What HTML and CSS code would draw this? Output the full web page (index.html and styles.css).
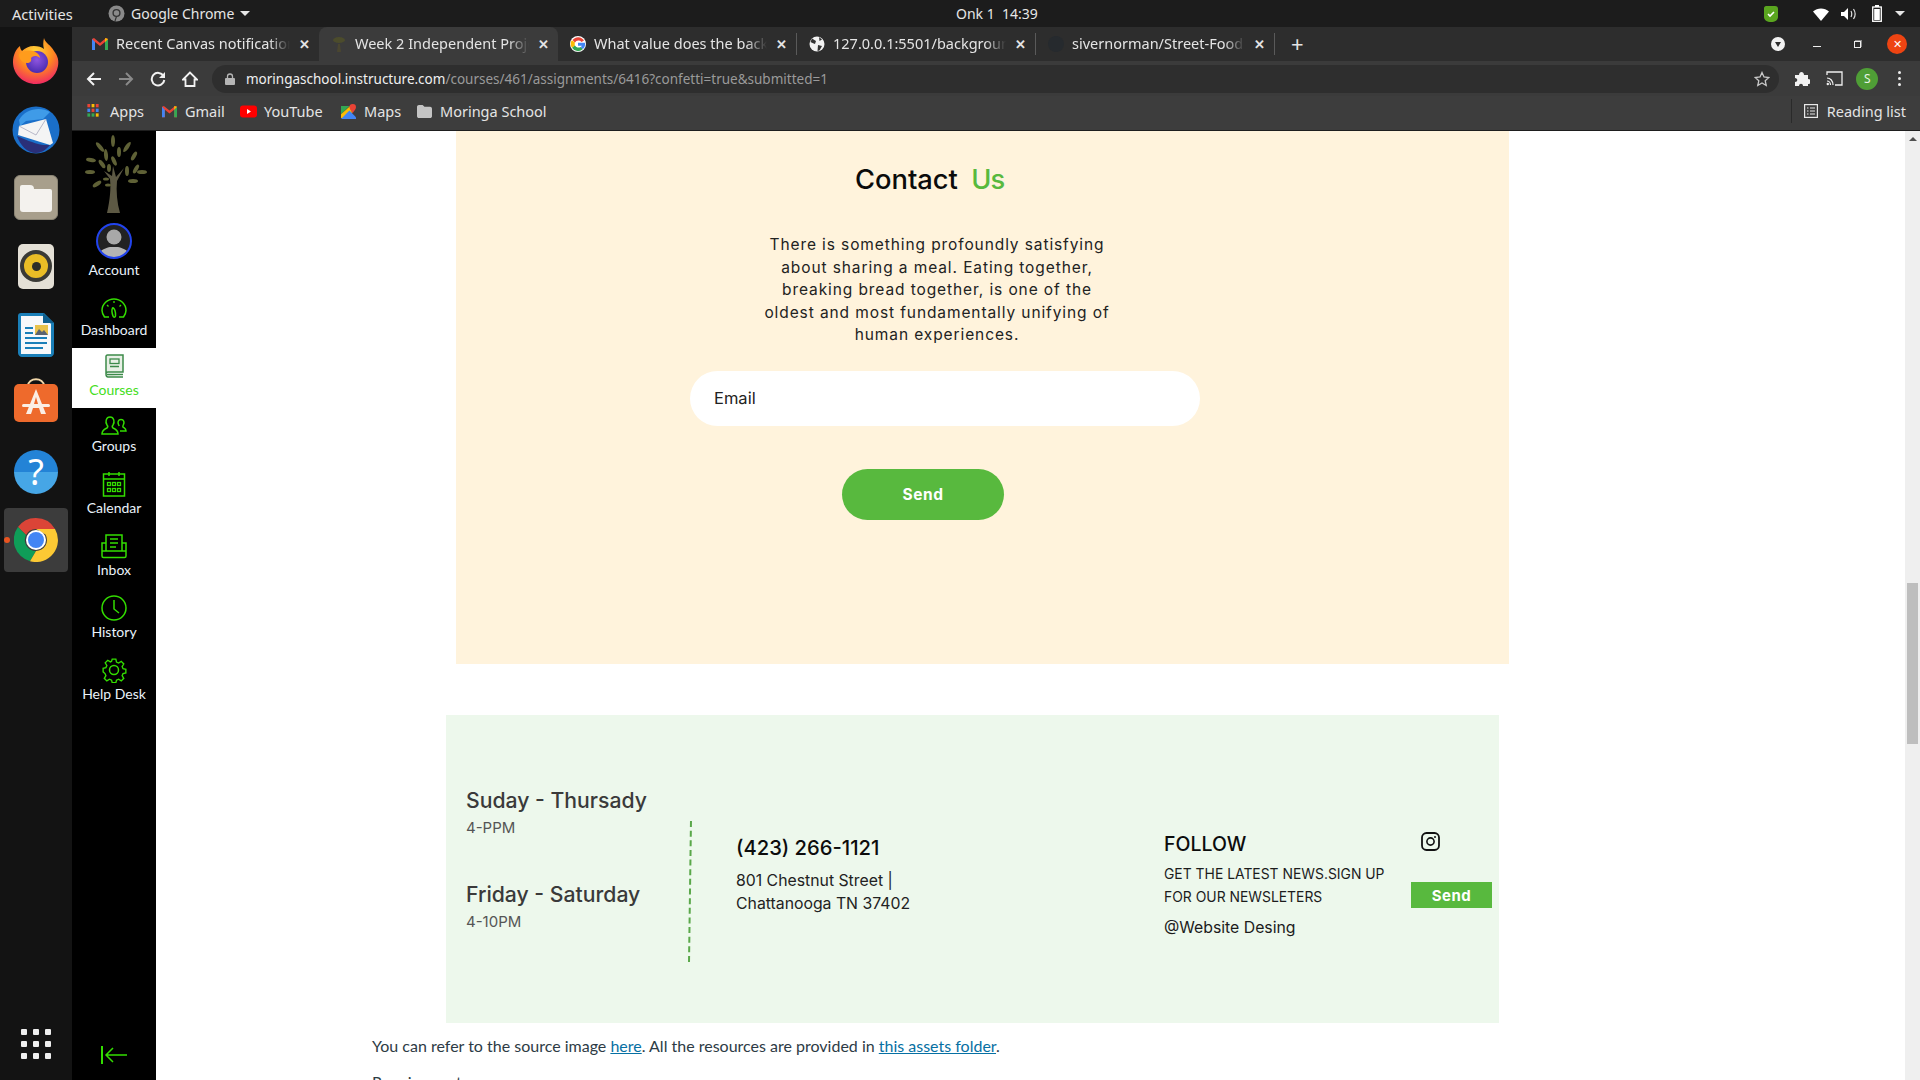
FILE: index.html
```html
<!DOCTYPE html>
<html lang="en">
<head>
  <meta charset="UTF-8">
  <title>Week 2 Independent Project</title>
  <link rel="stylesheet" href="styles.css">
</head>
<body>
  <div class="desktop">
    <header class="topbar">
      <span class="activities">Activities</span>
      <span class="app-menu">
        <svg width="17" height="17" viewBox="0 0 17 17"><circle cx="8.5" cy="8.5" r="8" fill="#8a8a8a"/><circle cx="8.5" cy="8" r="3.4" fill="none" stroke="#333" stroke-width="1.4"/><path d="M8.5 11.4 7 16" stroke="#333" stroke-width="1.2"/></svg>
        Google Chrome
        <i class="caret"></i>
      </span>
      <span class="clock">Onk 1 &nbsp;14:39</span>
      <span class="tray">
        <svg class="tray-shield" width="16" height="18" viewBox="0 0 16 18"><path d="M3 1h9c2 0 3 1 3 3v8c0 3-3 5-7 5-4 0-7-2-7-5V3c0-1 1-2 2-2z" fill="#5aa51f"/><path d="m5 9 2 2 4-4" fill="none" stroke="#fff" stroke-width="1.6"/></svg>
        <svg class="tray-wifi" width="16" height="14" viewBox="0 0 16 14"><path d="M0 4.500C4.500.5 11.500.5 16 4.500L8 14z" fill="#fff"/></svg>
        <svg class="tray-vol" width="16" height="14" viewBox="0 0 16 14"><path d="M0 5h3l4-4v12l-4-4H0z" fill="#fff"/><path d="M10 4c1 2 1 4 0 6M12.500 2c2 3 2 7 0 10" fill="none" stroke="#ddd" stroke-width="1.200"/></svg>
        <svg class="tray-bat" width="10" height="17" viewBox="0 0 10 17"><path d="M3 0h4v2H3z" fill="#fff"/><rect x=".7" y="2" width="8.600" height="14.300" fill="#222" stroke="#fff" stroke-width="1.300"/><rect x="2.200" y="4" width="5.600" height="11" fill="#fff"/></svg>
        <i class="caret"></i>
      </span>
    </header>

    <div class="workspace">
      <nav class="dock">
        <div class="dock-item">
          <svg width="46" height="48" viewBox="0 0 46 48">
            <defs>
              <radialGradient id="ffOuter" cx="50%" cy="30%" r="75%"><stop offset="0" stop-color="#ffd93b"/><stop offset=".5" stop-color="#ff8a1f"/><stop offset="1" stop-color="#ee1d6b"/></radialGradient>
              <radialGradient id="ffCore" cx="50%" cy="40%" r="60%"><stop offset="0" stop-color="#8f55e0"/><stop offset="1" stop-color="#4a2bb0"/></radialGradient>
            </defs>
            <path d="M31 1c1 5 7 7 10 13 4 5 5 10 4 15-2 11-11 18-22 18C10 47 0 37 0 25 0 18 3 12 7 9c0 2 1 4 2 5 3-3 7-5 12-5 4 0 8 1 10 3-1-3-1-7 0-11z" fill="url(#ffOuter)"/>
            <circle cx="24" cy="25" r="11" fill="url(#ffCore)"/>
            <path d="M6 17c5-4 13-5 18-1 2 2 3 3 3 5-4-3-7-2-9 0 1 3-1 5-4 5C10 26 6 23 6 17z" fill="#ff9c1c"/>
          </svg>
        </div>
        <div class="dock-item">
          <svg width="48" height="48" viewBox="0 0 48 48">
            <circle cx="24" cy="24" r="23.500" fill="#1a6fc9"/>
            <path d="M7 14C13 3 28 0 38 6l-7 7-17 2-6 5z" fill="#3f9be8"/>
            <path d="M7 20 34 13l7 24-3 2L6 29z" fill="#f4f4f4"/>
            <path d="M7 20 24 29l10-16" fill="none" stroke="#b8b8c8" stroke-width="1"/>
            <path d="M5 30c8 3 15 7 26 9l7 0c-4 5-9 8-14 8C15 47 8 39 5 30z" fill="#2a2f78"/>
          </svg>
        </div>
        <div class="dock-item">
          <div class="files-tile"><div class="files-folder"></div></div>
        </div>
        <div class="dock-item">
          <div class="speaker-tile"><div class="speaker-cone"><div class="speaker-dome"></div></div></div>
        </div>
        <div class="dock-item">
          <svg width="36" height="44" viewBox="0 0 36 44">
            <path d="M3 0h23l10 10v30c0 2-2 4-4 4H4c-2 0-4-2-4-4V3c0-2 1-3 3-3z" fill="#1a7fb8"/>
            <path d="M3 3h22l8 8v29c0 1 0 1-1 1H4c-1 0-1 0-1-1z" fill="#f6f8fa"/>
            <path d="M25 0l11 10H25z" fill="#0f5f8e"/>
            <rect x="7" y="14" width="8" height="2" fill="#1a7fb8"/><rect x="7" y="19" width="8" height="2" fill="#1a7fb8"/>
            <rect x="7" y="24" width="22" height="2" fill="#1a7fb8"/><rect x="7" y="29" width="22" height="2" fill="#1a7fb8"/><rect x="7" y="34" width="18" height="2" fill="#1a7fb8"/>
            <rect x="17" y="12" width="13" height="10" fill="#e8c24a"/><path d="M17 22l4-6 3 3 2-2 4 5z" fill="#5b6470"/>
          </svg>
        </div>
        <div class="dock-item">
          <svg class="store-logo" width="44" height="44" viewBox="0 0 44 44">
            <path d="M14 8c0-9 16-9 16 0" fill="none" stroke="#f0d6a8" stroke-width="2"/>
            <rect y="6" width="44" height="38" rx="5" fill="#ee6a2c"/>
            <path d="M22 11 12 36h5l2-6h6l2 6h5zM22 19l2 7h-4z" fill="#fbeee4"/>
            <rect x="8" y="26" width="28" height="3" rx="1.500" fill="#fbeee4"/>
          </svg>
        </div>
        <div class="dock-item">
          <div class="help-tile">?</div>
        </div>
        <div class="dock-item dock-active">
          <i class="running-dot"></i>
          <svg class="chrome-logo" width="44" height="44" viewBox="0 0 44 44">
            <path d="M22 0a22 22 0 0 1 19 11H22a11 11 0 0 0-10 6L4 9A22 22 0 0 1 22 0z" fill="#db4437"/>
            <path d="M4 9l8 8 a11 11 0 0 0 10 16l-6 10.200A22 22 0 0 1 4 9z" fill="#0f9d58"/>
            <path d="M41 11a22 22 0 0 1-25 32.200L22 33a11 11 0 0 0 9.500-16.500L22 11z" fill="#fcc934"/>
            <circle cx="22" cy="22" r="10" fill="#fff"/><circle cx="22" cy="22" r="8" fill="#4285f4"/>
          </svg>
        </div>
        <div class="dock-apps">
          <i></i><i></i><i></i><i></i><i></i><i></i><i></i><i></i><i></i>
        </div>
      </nav>

      <div class="window">
        <div class="tabstrip">
          <div class="tab">
            <svg class="favicon" viewBox="0 0 16 16"><path d="M0 14V3l2-1 6 5 6-5 2 1v11h-3V6L8 10 3 6v8z" fill="#ea4335"/><path d="M0 14V3l3 3v8z" fill="#4285f4"/><path d="M16 14V3l-3 3v8z" fill="#34a853"/><path d="M13 6V2l3 1z" fill="#fbbc04"/></svg>
            <span class="tab-title">Recent Canvas notification</span>
            <span class="tab-close">&#x2715;</span>
          </div>
          <div class="tab tab-active">
            <svg class="favicon" viewBox="0 0 16 16"><path d="M7 8h2l1 8H6z" fill="#4a4630"/><ellipse cx="8" cy="4" rx="6" ry="3" fill="#4c4c2c"/></svg>
            <span class="tab-title">Week 2 Independent Proje</span>
            <span class="tab-close">&#x2715;</span>
          </div>
          <div class="tab tab-sep">
            <svg class="favicon" viewBox="0 0 16 16"><circle cx="8" cy="8" r="8" fill="#fff"/><path d="M14 4.500A7 7 0 0 0 2.500 4L5 6.500A4 4 0 0 1 11.500 6z" fill="#ea4335"/><path d="M1.800 4.200A7 7 0 0 0 2 11.800L5 9.500a4 4 0 0 1 0-3z" fill="#fbbc04"/><path d="M2 11.800A7 7 0 0 0 13 13l-2.500-2A4 4 0 0 1 5 9.500z" fill="#34a853"/><path d="M15 6.700H8v3h4a3.500 3.500 0 0 1-1.500 1.500L13 13c1.700-1.600 2.400-4 2-6.300z" fill="#4285f4"/></svg>
            <span class="tab-title">What value does the back</span>
            <span class="tab-close">&#x2715;</span>
          </div>
          <div class="tab tab-sep">
            <svg class="favicon" viewBox="0 0 16 16"><circle cx="8" cy="8" r="7.500" fill="#f2f2f2"/><path d="M3 2.500 7 5 6 8 3.500 7 1.500 6zM9 9l4 1-2.500 4.500L8.500 15zM10 1l3 2.500L10.500 5z" fill="#333"/></svg>
            <span class="tab-title">127.0.0.1:5501/backgroun</span>
            <span class="tab-close">&#x2715;</span>
          </div>
          <div class="tab tab-sep">
            <svg class="favicon" viewBox="0 0 16 16"><circle cx="8" cy="8" r="8" fill="#262a2e"/></svg>
            <span class="tab-title">sivernorman/Street-Food</span>
            <span class="tab-close">&#x2715;</span>
          </div>
          <span class="new-tab">+</span>
          <span class="window-controls">
            <span class="tab-search"><i></i></span>
            <span class="win-min"></span>
            <span class="win-restore"></span>
            <span class="win-close">&#x2715;</span>
          </span>
        </div>

        <div class="toolbar">
          <span class="tool-btn"><svg width="16" height="16" viewBox="0 0 16 16"><path d="M15 8H2M8 2 2 8l6 6" fill="none" stroke="#f2f2f2" stroke-width="2"/></svg></span>
          <span class="tool-btn"><svg width="16" height="16" viewBox="0 0 16 16"><path d="M1 8h13M8 2l6 6-6 6" fill="none" stroke="#8a8a8a" stroke-width="2"/></svg></span>
          <span class="tool-btn"><svg width="16" height="16" viewBox="0 0 16 16"><path d="M13.500 5A6.300 6.300 0 1 0 14.300 9" fill="none" stroke="#f2f2f2" stroke-width="2"/><path d="M15 1v6H9z" fill="#f2f2f2"/></svg></span>
          <span class="tool-btn"><svg width="16" height="16" viewBox="0 0 16 16"><path d="M8 1.500 1 8.500h2.500V15h9V8.500H15z" fill="none" stroke="#f2f2f2" stroke-width="1.800"/></svg></span>
          <div class="omnibox">
            <svg class="lock" width="10" height="12" viewBox="0 0 10 12"><path d="M2.500 5V3.500a2.500 2.500 0 0 1 5 0V5" fill="none" stroke="#b5b5b5" stroke-width="1.300"/><rect y="5" width="10" height="7" rx="1" fill="#b5b5b5"/></svg>
            <span class="url"><b>moringaschool.instructure.com</b>/courses/461/assignments/6416?confetti=true&amp;submitted=1</span>
            <svg class="star" width="16" height="16" viewBox="0 0 16 16"><path d="M8 1.500 10 6l4.800.5-3.600 3.200 1 4.800L8 12l-4.200 2.500 1-4.800L1.200 6.500 6 6z" fill="none" stroke="#c8c8c8" stroke-width="1.300"/></svg>
          </div>
          <div class="tool-right">
            <span class="tool-end"><svg width="16" height="16" viewBox="0 0 16 16"><path d="M1 4h4c0-4 5-4 5 0h4v4c4 0 4 5 0 5v2H9c0-3-4-3-4 0H1v-4c3 0 3-4 0-4z" fill="#f2f2f2"/></svg></span>
            <span class="tool-end"><svg width="17" height="15" viewBox="0 0 17 15"><path d="M1 4V1h15v13h-7" fill="none" stroke="#f0f0f0" stroke-width="1.300"/><path d="M1 7c3.500 0 6 3 6 7M1 10c2 0 3.500 2 3.500 4" fill="none" stroke="#f0f0f0" stroke-width="1.200"/><circle cx="1.800" cy="13" r="1.200" fill="#f0f0f0"/></svg></span>
            <span class="tool-end"><span class="avatar">S</span></span>
            <span class="tool-end"><span class="dots"><i></i><i></i><i></i></span></span>
          </div>
        </div>

        <div class="bookmarks">
          <span class="bm bm-apps">
            <svg class="bm-icon" viewBox="0 0 12 16"><g fill="#ea4335"><rect width="3" height="3.500"/></g><rect x="4.500" width="3" height="3.500" fill="#fbbc04"/><rect x="9" width="3" height="3.500" fill="#ea4335"/><rect y="5" width="3" height="3.500" fill="#4285f4"/><rect x="4.500" y="5" width="3" height="3.500" fill="#ea4335"/><rect x="9" y="5" width="3" height="3.500" fill="#4285f4"/><rect y="10" width="3" height="3.500" fill="#34a853"/><rect x="4.500" y="10" width="3" height="3.500" fill="#34a853"/><rect x="9" y="10" width="3" height="3.500" fill="#fbbc04"/></svg>
            Apps
          </span>
          <span class="bm bm-gmail">
            <svg class="bm-icon" viewBox="0 0 16 16"><path d="M0 14V3l2-1 6 5 6-5 2 1v11h-3V6L8 10 3 6v8z" fill="#ea4335"/><path d="M0 14V3l3 3v8z" fill="#4285f4"/><path d="M16 14V3l-3 3v8z" fill="#34a853"/><path d="M13 6V2l3 1z" fill="#fbbc04"/></svg>
            Gmail
          </span>
          <span class="bm bm-youtube">
            <svg class="bm-icon" viewBox="0 0 17 14"><rect y="1" width="17" height="12" rx="3" fill="#f00"/><path d="M7 4.500v5L11 7z" fill="#fff"/></svg>
            YouTube
          </span>
          <span class="bm bm-maps">
            <svg class="bm-icon" viewBox="0 0 16 16"><path d="M0 2h9l-9 9z" fill="#34a853"/><path d="M0 11 11 1l1 14H0z" fill="#fbbc04"/><path d="M0 16l9-9 7 7v2z" fill="#4285f4"/><path d="M12.500 0A3.500 3.500 0 0 1 16 3.500C16 6 13 8 12.500 10 12 8 9 6 9 3.500A3.500 3.500 0 0 1 12.500 0z" fill="#ea4335"/></svg>
            Maps
          </span>
          <span class="bm bm-folder">
            <svg class="bm-icon" viewBox="0 0 16 14"><path d="M0 2c0-1 1-2 2-2h4l2 2h6c1 0 2 1 2 2v8c0 1-1 2-2 2H2c-1 0-2-1-2-2z" fill="#c4c4c4"/></svg>
            Moringa School
          </span>
          <span class="reading-list">
            <svg width="14" height="14" viewBox="0 0 14 14"><rect x=".6" y=".6" width="12.800" height="12.800" fill="none" stroke="#e8e8e8" stroke-width="1.200"/><path d="M3 4h1.500M6 4h5M3 7h1.500M6 7h5M3 10h1.500M6 10h5" stroke="#e8e8e8" stroke-width="1.200"/></svg>
            Reading list
          </span>
        </div>

        <div class="app">
          <aside class="sidebar">
            <div class="logo">
              <svg width="66" height="80" viewBox="0 0 66 80">
                <path d="M26 78c3-14 4-24 3-34l-6-8 8 5 1-10 3 11 8-9-7 13c-1 10 0 22 3 32z" fill="#5d5944"/>
                <g fill="#5f6136">
                  <ellipse cx="32" cy="6" rx="2" ry="6"/>
                  <ellipse cx="19" cy="12" rx="2" ry="6" transform="rotate(-40 19 12)"/>
                  <ellipse cx="46" cy="12" rx="2" ry="6" transform="rotate(35 46 12)"/>
                  <ellipse cx="25" cy="20" rx="2" ry="6" transform="rotate(-5 25 20)"/>
                  <ellipse cx="38" cy="17" rx="2" ry="5"/>
                  <ellipse cx="53" cy="21" rx="2" ry="5" transform="rotate(30 53 21)"/>
                  <ellipse cx="10" cy="25" rx="5" ry="2" transform="rotate(10 10 25)"/>
                  <ellipse cx="21" cy="29" rx="2" ry="5" transform="rotate(-35 21 29)"/>
                  <ellipse cx="33" cy="26" rx="2" ry="5" transform="rotate(-25 33 26)"/>
                  <ellipse cx="9" cy="37" rx="5" ry="2"/>
                  <ellipse cx="28" cy="33" rx="2" ry="4"/>
                  <ellipse cx="46" cy="36" rx="2" ry="5"/>
                  <ellipse cx="55" cy="34" rx="2" ry="5" transform="rotate(30 55 34)"/>
                  <ellipse cx="61" cy="37" rx="5" ry="2"/>
                  <ellipse cx="16" cy="49" rx="2" ry="5" transform="rotate(55 16 49)"/>
                  <ellipse cx="25" cy="44" rx="3" ry="1.600"/>
                  <ellipse cx="27" cy="50" rx="3" ry="1.600"/>
                  <ellipse cx="52" cy="46" rx="5" ry="2"/>
                </g>
              </svg>
            </div>
            <div class="nav-item nav-account">
              <svg width="36" height="36" viewBox="0 0 36 36">
                <defs><clipPath id="avatarClip"><circle cx="18" cy="18" r="16.500"/></clipPath></defs>
                <circle cx="18" cy="18" r="17" fill="#222"/>
                <g clip-path="url(#avatarClip)"><circle cx="18" cy="14" r="7.500" fill="#a8a8a8"/><path d="M2 34c1-8 9-9 12-10h8c3 1 11 2 12 10z" fill="#b4b4b4"/></g>
                <circle cx="18" cy="18" r="17" fill="none" stroke="#2244ee" stroke-width="2"/>
              </svg>
              <span class="nav-label">Account</span>
            </div>
            <div class="nav-item nav-short">
              <svg class="nav-icon" viewBox="0 0 26 26"><path d="M8 24H3.500C1.500 21 1 19 1 17.500 1 11 6.500 6 13 6s12 5 12 11.500c0 2-.5 3.500-2.500 6.500H18" fill="none" stroke="currentColor" stroke-width="1.500"/><path d="M11.500 15c2-1 3.500 5 3 8-.500 1.500-2 1.500-2.500 0-.7-2-1.500-6-.5-8z" fill="none" stroke="currentColor" stroke-width="1.500"/><path d="M13 8v2M6 12l1.500 1.500M20 12l-1.500 1.500" stroke="currentColor" stroke-width="1.300"/></svg>
              <span class="nav-label">Dashboard</span>
            </div>
            <div class="nav-item nav-short nav-current">
              <svg class="nav-icon" viewBox="0 0 26 26"><path d="M5 21V3.500c0-.8.500-1.500 1.500-1.500H22v17H7c-1.500 0-2 1-2 2s.5 3 2 3h15" fill="#e8f0e6" stroke="#3c8a4a" stroke-width="1.500"/><rect x="9" y="6" width="9" height="4.500" fill="none" stroke="#3c8a4a" stroke-width="1.300"/><path d="M9 13.500h9M6 21.500h16" stroke="#3c8a4a" stroke-width="1.400"/></svg>
              <span class="nav-label">Courses</span>
            </div>
            <div class="nav-item nav-tight">
              <svg class="nav-icon" viewBox="0 0 26 26"><path d="M1 25c0-4 3-5 5-6 1-1 1-2 0-3-2-3-1-8 3-8s5 5 3 8c-1 1-1 2 0 3 2 1 5 2 5 6z" fill="none" stroke="currentColor" stroke-width="1.500"/><path d="M19 22h6c0-3-2-3-3-4-.5-1 0-1.500.5-2.500 1-2 .5-5-2.500-5s-3.500 3-2.500 5l.7 1.500" fill="none" stroke="currentColor" stroke-width="1.500"/></svg>
              <span class="nav-label">Groups</span>
            </div>
            <div class="nav-item">
              <svg class="nav-icon" viewBox="0 0 26 26"><rect x="2.500" y="3" width="21" height="22" fill="none" stroke="currentColor" stroke-width="1.500"/><path d="M2.500 8h21M8 1v4M18 1v4" stroke="currentColor" stroke-width="1.500"/><g fill="none" stroke="currentColor" stroke-width="1.300"><rect x="6.500" y="11.500" width="3" height="3"/><rect x="11.500" y="11.500" width="3" height="3"/><rect x="16.500" y="11.500" width="3" height="3"/><rect x="6.500" y="17.500" width="3" height="3"/><rect x="11.500" y="17.500" width="3" height="3"/><rect x="16.500" y="17.500" width="3" height="3"/></g></svg>
              <span class="nav-label">Calendar</span>
            </div>
            <div class="nav-item">
              <svg class="nav-icon" viewBox="0 0 26 26"><path d="M5 18V2h16v16" fill="none" stroke="currentColor" stroke-width="1.500"/><path d="M9 6h8M9 10h8M9 14h6" stroke="currentColor" stroke-width="1.500"/><path d="M5 10H1v13c0 1 .5 1.500 1.500 1.500h21c1 0 1.500-.5 1.500-1.500V10h-4M1 18h24" fill="none" stroke="currentColor" stroke-width="1.500"/></svg>
              <span class="nav-label">Inbox</span>
            </div>
            <div class="nav-item">
              <svg class="nav-icon" viewBox="0 0 26 26"><circle cx="13" cy="13" r="12" fill="none" stroke="currentColor" stroke-width="1.500"/><path d="M13 5v9l5 4" fill="none" stroke="currentColor" stroke-width="1.500"/></svg>
              <span class="nav-label">History</span>
            </div>
            <div class="nav-item">
              <svg class="nav-icon" viewBox="0 0 26 26"><circle cx="13" cy="13" r="4.500" fill="none" stroke="currentColor" stroke-width="1.500"/><path d="M11 1h4l.7 3.300 2.300 1 2.900-1.800 2.800 2.800-1.800 2.900 1 2.300 3.100.7v4l-3.100.7-1 2.300 1.800 2.900-2.800 2.800-2.900-1.800-2.300 1-.7 2.900h-4l-.7-2.900-2.300-1-2.900 1.800-2.800-2.800 1.800-2.900-1-2.300L1 15v-4l3.100-.7 1-2.300-1.800-2.900 2.800-2.800L9 4.100l1.300-.8z" fill="none" stroke="currentColor" stroke-width="1.500" transform="translate(1.200 1.200) scale(.91)"/></svg>
              <span class="nav-label">Help Desk</span>
            </div>
            <div class="collapse">
              <svg width="26" height="18" viewBox="0 0 26 18"><path d="M1 0v18" stroke="currentColor" stroke-width="2"/><path d="M26 9H5M12 2 5 9l7 7" fill="none" stroke="currentColor" stroke-width="1.500"/></svg>
            </div>
          </aside>

          <main class="content">
            <section class="contact">
              <h2 class="contact-title">Contact <span class="green">Us</span></h2>
              <p class="contact-text">There is something profoundly satisfying<br>about sharing a meal. Eating together,<br>breaking bread together, is one of the<br>oldest and most fundamentally unifying of<br>human experiences.</p>
              <div class="email-input">Email</div>
              <button class="send-big">Send</button>
            </section>

            <section class="footer-panel">
              <div class="hours">
                <h3>Suday - Thursady</h3>
                <p>4-PPM</p>
                <h3 class="hours-second">Friday - Saturday</h3>
                <p>4-10PM</p>
              </div>
              <div class="divider"></div>
              <div class="address">
                <h3>(423) 266-1121</h3>
                <p>801 Chestnut Street |<br>Chattanooga TN 37402</p>
              </div>
              <div class="follow">
                <h3>FOLLOW</h3>
                <p class="follow-news">GET THE LATEST NEWS.SIGN UP<br>FOR OUR NEWSLETERS</p>
                <p class="follow-handle">@Website Desing</p>
              </div>
              <div class="social">
                <svg class="insta" width="19" height="19" viewBox="0 0 19 19"><rect x="1" y="1" width="17" height="17" rx="4.500" fill="none" stroke="#111" stroke-width="1.800"/><circle cx="9.500" cy="9.500" r="3.600" fill="none" stroke="#111" stroke-width="1.600"/><circle cx="14" cy="5" r="1" fill="#111"/></svg>
                <button class="send-small">Send</button>
              </div>
            </section>

            <p class="assignment-text">You can refer to the source image <a href="#">here</a>. All the resources are provided in <a href="#">this assets folder</a>.</p>
            <p class="assignment-text assignment-next">Requirements:</p>
          </main>

          <div class="scrollbar">
            <i class="scroll-arrow"></i>
            <div class="scroll-thumb"></div>
          </div>
        </div>
      </div>
    </div>
  </div>
</body>
</html>
```

FILE: styles.css
```css
* {
  box-sizing: border-box;
}

body {
  margin: 0;
  background: #000;
  font-family: "Noto Sans", sans-serif;
  overflow: hidden;
}

h2, h3, p {
  margin: 0;
}

.desktop {
  display: flex;
  flex-direction: column;
  width: 1920px;
  height: 1080px;
}

/* gnome top bar */
.topbar {
  position: relative;
  display: flex;
  align-items: center;
  flex: none;
  height: 27px;
  padding-left: 12px;
  background: #1c1c1c;
  color: #e6e6e6;
  font-size: 14px;
}

.activities {
  width: 96px;
  font-size: 14.6px;
}

.app-menu {
  display: flex;
  align-items: center;
  gap: 6px;
}

.caret {
  display: inline-block;
  width: 0;
  height: 0;
  border-left: 5px solid transparent;
  border-right: 5px solid transparent;
  border-top: 5px solid #e6e6e6;
}

.clock {
  position: absolute;
  left: 956px;
  top: 4px;
}

.tray {
  display: flex;
  align-items: center;
  margin-left: auto;
  padding-right: 15px;
}

.tray-shield {
  margin-right: 34px;
}

.tray-vol {
  margin: 0 15px 0 12px;
}

.tray-bat {
  margin-right: 13px;
}

.workspace {
  display: flex;
  flex: 1;
  min-height: 0;
}

/* ubuntu dock */
.dock {
  display: flex;
  flex-direction: column;
  flex: none;
  width: 72px;
  background: #131313;
}

.dock-item {
  position: relative;
  display: flex;
  align-items: center;
  justify-content: center;
  height: 68.4px;
}

.dock-active::before {
  content: "";
  position: absolute;
  left: 4px;
  top: 2px;
  width: 64px;
  height: 64px;
  border-radius: 4px;
  background: #3c3c3c;
}

.chrome-logo {
  position: relative;
}

.store-logo {
  margin-bottom: 6px;
}

.running-dot {
  position: absolute;
  left: 4px;
  top: 31px;
  z-index: 1;
  width: 6px;
  height: 6px;
  border-radius: 50%;
  background: #e95420;
}

.files-tile {
  display: flex;
  align-items: center;
  justify-content: center;
  width: 44px;
  height: 45px;
  border: 1px solid #8a8474;
  border-radius: 6px;
  background: #a89f8c;
}

.files-folder {
  position: relative;
  width: 32px;
  height: 23px;
  margin-top: 5px;
  border-radius: 0 2px 3px 3px;
  background: #f4f2ee;
}

.files-folder::before {
  content: "";
  position: absolute;
  left: 0;
  top: -4px;
  width: 14px;
  height: 4px;
  border-radius: 2px 4px 0 0;
  background: #f4f2ee;
}

.speaker-tile {
  display: flex;
  align-items: center;
  justify-content: center;
  width: 36px;
  height: 45px;
  border-radius: 5px;
  background: #e4e0d6;
}

.speaker-cone {
  display: flex;
  align-items: center;
  justify-content: center;
  width: 32px;
  height: 32px;
  border: 4px solid #3a3a36;
  border-radius: 50%;
  background: #eabd26;
}

.speaker-dome {
  width: 9px;
  height: 9px;
  border-radius: 50%;
  background: #2c2c28;
}

.help-tile {
  width: 44px;
  height: 44px;
  border-radius: 50%;
  background: linear-gradient(#2383d6 50%, #46a6e6 50%);
  color: #fff;
  font-size: 36px;
  line-height: 44px;
  text-align: center;
}

.dock-apps {
  display: grid;
  grid-template-columns: repeat(3, 6px);
  gap: 6px;
  margin: auto 0 21px 21px;
}

.dock-apps i {
  height: 6px;
  border-radius: 1px;
  background: #eee;
}

.window {
  display: flex;
  flex-direction: column;
  flex: 1;
  min-width: 0;
}

/* chrome tabs */
.tabstrip {
  display: flex;
  align-items: stretch;
  flex: none;
  height: 34px;
  padding-left: 8px;
  background: #2d2d2d;
  color: #e4e4e4;
  font-size: 14.5px;
}

.tab {
  display: flex;
  align-items: center;
  flex: none;
  width: 239px;
  padding: 0 9px 0 12px;
}

.tab-active {
  border-radius: 8px 8px 0 0;
  background: #3b3b3b;
}

.tab-sep {
  border-right: 1px solid #5a5a5a;
  margin: 6px 0;
}

.favicon {
  flex: none;
  width: 16px;
  height: 16px;
  margin-right: 8px;
}

.tab-title {
  flex: 1;
  min-width: 0;
  padding-bottom: 2px;
  overflow: hidden;
  white-space: nowrap;
  -webkit-mask-image: linear-gradient(to right, #000 88%, transparent);
  mask-image: linear-gradient(to right, #000 88%, transparent);
}

.tab-close {
  flex: none;
  width: 12px;
  margin-left: 8px;
  font-size: 12.5px;
  font-weight: 700;
  text-align: center;
}

.new-tab {
  margin-left: 16px;
  font-size: 22px;
  line-height: 32px;
}

.window-controls {
  display: flex;
  align-items: center;
  margin-left: auto;
  padding-right: 13px;
}

.tab-search {
  display: flex;
  align-items: center;
  justify-content: center;
  width: 14px;
  height: 14px;
  margin-right: 28px;
  border-radius: 50%;
  background: #f2f2f2;
}

.tab-search i {
  width: 0;
  height: 0;
  border-left: 3.5px solid transparent;
  border-right: 3.5px solid transparent;
  border-top: 5px solid #2d2d2d;
}

.win-min {
  width: 8px;
  height: 1px;
  margin: 4px 32.5px 0 0;
  background: #eee;
}

.win-restore {
  width: 7px;
  height: 7px;
  margin-right: 26.5px;
  border: 1px solid #eee;
  box-shadow: 1px -1px 0 0 #888;
}

.win-close {
  width: 20px;
  height: 20px;
  border-radius: 50%;
  background: #ee4412;
  color: #fff;
  font-size: 11px;
  line-height: 20px;
  text-align: center;
}

/* toolbar + omnibox */
.toolbar {
  display: flex;
  align-items: center;
  flex: none;
  height: 35px;
  padding-left: 6px;
  background: #3b3b3b;
}

.tool-btn {
  display: flex;
  align-items: center;
  justify-content: center;
  width: 32px;
}

.omnibox {
  display: flex;
  align-items: center;
  width: 1567px;
  height: 28px;
  margin-left: 6px;
  padding: 0 9px 0 13px;
  border-radius: 14px;
  background: #2e2e2e;
}

.lock {
  margin-right: 11px;
}

.url {
  flex: 1;
  color: #9a9a9a;
  font-size: 13.5px;
  white-space: nowrap;
}

.url b {
  color: #f0f0f0;
  font-weight: 400;
}

.tool-right {
  display: flex;
  margin-left: 7px;
}

.tool-end {
  display: flex;
  align-items: center;
  justify-content: center;
  width: 32.5px;
}

.avatar {
  width: 22px;
  height: 22px;
  border-radius: 50%;
  background: #4f9e36;
  color: #e8f4e4;
  font-size: 12px;
  line-height: 22px;
  text-align: center;
}

.dots {
  display: flex;
  flex-direction: column;
  gap: 3px;
}

.dots i {
  width: 3px;
  height: 3px;
  border-radius: 50%;
  background: #eee;
}

/* bookmarks */
.bookmarks {
  display: flex;
  align-items: center;
  flex: none;
  height: 35px;
  padding: 0 0 4px 15px;
  border-bottom: 1px solid #1e1e1e;
  background: #3d3d3d;
  color: #e4e4e4;
  font-size: 14.5px;
}

.bm {
  display: flex;
  align-items: center;
}

.bm-icon {
  flex: none;
  width: 15px;
  height: 15px;
  margin-right: 8px;
}

.bm-apps {
  width: 75px;
}

.bm-apps .bm-icon {
  width: 12px;
  margin-right: 11px;
}

.bm-gmail {
  width: 78px;
}

.bm-youtube {
  width: 101px;
}

.bm-youtube .bm-icon {
  width: 17px;
  margin-right: 7px;
}

.bm-maps {
  width: 76px;
}

.reading-list {
  display: flex;
  align-items: center;
  gap: 9px;
  height: 24px;
  margin-left: auto;
  padding: 0 14px 0 12px;
  border-left: 1px solid #2a2a2a;
}

/* canvas layout */
.app {
  display: flex;
  flex: 1;
  min-height: 0;
  background: #fff;
}

.sidebar {
  display: flex;
  flex-direction: column;
  flex: none;
  width: 84px;
  background: #000;
  color: #33dd00;
}

.logo {
  display: flex;
  align-items: flex-start;
  justify-content: center;
  height: 87px;
  padding-top: 4px;
}

.nav-item {
  display: flex;
  flex-direction: column;
  align-items: center;
  justify-content: flex-end;
  gap: 2px;
  height: 62px;
  padding-bottom: 9px;
}

.nav-account {
  height: 70px;
}

.nav-short {
  height: 60px;
}

.nav-tight {
  height: 56px;
}

.nav-icon {
  width: 26px;
  height: 26px;
}

.nav-label {
  color: #e9f2fa;
  font-family: Lato, sans-serif;
  font-size: 14px;
  line-height: 18px;
  white-space: nowrap;
}

.nav-current {
  background: #fff;
}

.nav-current .nav-label {
  color: #44dd22;
}

.collapse {
  display: flex;
  justify-content: center;
  margin-top: auto;
  padding-bottom: 16px;
}

.content {
  flex: 1;
  min-width: 0;
  overflow: hidden;
  font-family: Inter, sans-serif;
}

/* contact section */
.contact {
  width: 1053px;
  height: 533px;
  margin-left: 300px;
  padding-top: 31px;
  background: #fff3dc;
}

.contact-title {
  margin-left: 399px;
  color: #0b0b0b;
  font-size: 27.3px;
  font-weight: 500;
  line-height: 36px;
  word-spacing: 6px;
}

.green {
  color: #58b93e;
  letter-spacing: -1px;
}

.contact-text {
  width: 380px;
  margin: 36px 0 0 291px;
  color: #222;
  font-size: 15.5px;
  line-height: 22.5px;
  text-align: center;
  letter-spacing: .9px;
}

.email-input {
  width: 510px;
  height: 55px;
  margin: 24.5px 0 0 234px;
  padding-left: 24px;
  border-radius: 28px;
  background: #fff;
  color: #222;
  font-size: 16.5px;
  line-height: 54px;
}

.send-big {
  display: block;
  width: 162px;
  height: 51px;
  margin: 43px 0 0 386px;
  border: none;
  border-radius: 26px;
  background: #58b93e;
  color: #fff;
  font-family: Inter, sans-serif;
  font-size: 15.5px;
  font-weight: 700;
  letter-spacing: .5px;
}

/* footer of the submitted page */
.footer-panel {
  display: flex;
  align-items: flex-start;
  width: 1053px;
  height: 308px;
  margin: 51px 0 0 290px;
  padding-left: 20px;
  background: #edf8ec;
}

.hours {
  flex: none;
  width: 223px;
  padding-top: 72px;
  color: #3a3a3a;
}

.hours h3 {
  font-size: 21.2px;
  font-weight: 500;
  line-height: 26px;
}

.hours p {
  margin-top: 5px;
  color: #555;
  font-size: 15px;
  line-height: 20px;
}

.hours .hours-second {
  margin-top: 42.5px;
}

.divider {
  flex: none;
  height: 141px;
  margin-top: 106px;
  border-left: 2px dashed #5aa84a;
  transform: rotate(.8deg);
}

.address {
  flex: none;
  width: 428px;
  margin-left: 45px;
  padding-top: 119px;
  color: #222;
}

.address h3 {
  color: #0c0c0c;
  font-size: 20.2px;
  font-weight: 500;
  line-height: 28px;
}

.address p {
  margin-top: 8px;
  font-size: 15.8px;
  line-height: 22.5px;
}

.follow {
  flex: none;
  width: 247px;
  padding-top: 116px;
  color: #1c1c1c;
}

.follow h3 {
  color: #0c0c0c;
  font-size: 19.5px;
  font-weight: 500;
  line-height: 26px;
}

.follow-news {
  margin-top: 5.5px;
  font-size: 13.9px;
  line-height: 23px;
}

.follow-handle {
  margin-top: 7px;
  font-size: 15.8px;
  line-height: 23px;
}

.social {
  flex: none;
  width: 81px;
  padding-top: 117px;
}

.insta {
  display: block;
  margin-left: 10px;
}

.send-small {
  display: block;
  width: 81px;
  height: 26px;
  margin-top: 31px;
  border: none;
  background: #58b93e;
  color: #fff;
  font-family: Inter, sans-serif;
  font-size: 15px;
  font-weight: 700;
  letter-spacing: .5px;
}

.assignment-text {
  margin: 11px 0 0 216px;
  color: #2d3b45;
  font-family: Lato, sans-serif;
  font-size: 16px;
  line-height: 24px;
}

.assignment-text a {
  color: #0770a3;
}

.assignment-next {
  margin-top: 12px;
}

.scrollbar {
  position: relative;
  flex: none;
  width: 15px;
  background: #efefef;
}

.scroll-arrow {
  position: absolute;
  left: 4px;
  top: 6px;
  width: 0;
  height: 0;
  border-left: 4px solid transparent;
  border-right: 4px solid transparent;
  border-bottom: 4px solid #505050;
}

.scroll-thumb {
  width: 11px;
  height: 161px;
  margin: 452px 0 0 2px;
  background: #bebebe;
}
```
